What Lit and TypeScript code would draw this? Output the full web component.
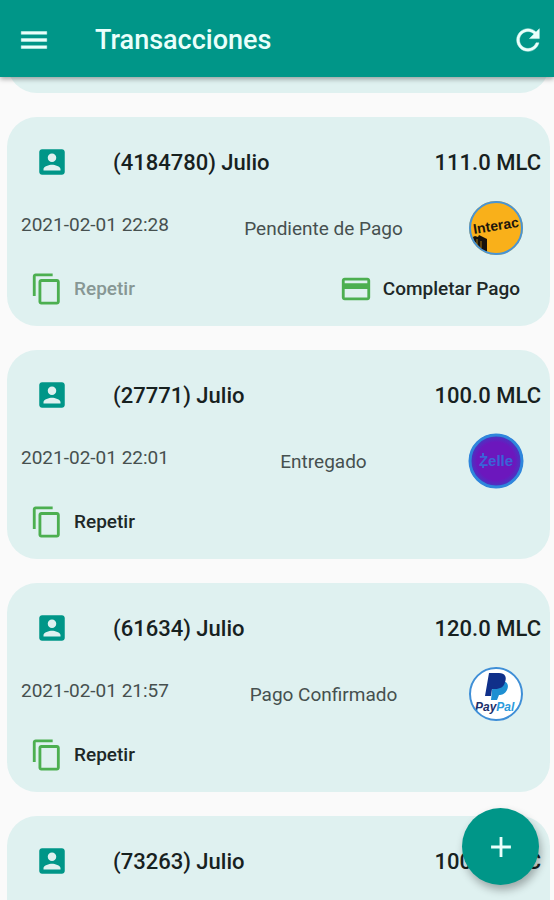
import { LitElement, html, svg, css, nothing } from "lit";
import { customElement, property } from "lit/decorators.js";

type Provider = "interac" | "zelle" | "paypal" | "other";

interface Transaction {
  id: string;
  name: string;
  amount: string;
  date: string;
  status: string;
  provider: Provider;
  pending: boolean;
}

const transactions: Transaction[] = [
  { id: "4184780", name: "Julio", amount: "111.0 MLC", date: "2021-02-01 22:28", status: "Pendiente de Pago", provider: "interac", pending: true },
  { id: "27771", name: "Julio", amount: "100.0 MLC", date: "2021-02-01 22:01", status: "Entregado", provider: "zelle", pending: false },
  { id: "61634", name: "Julio", amount: "120.0 MLC", date: "2021-02-01 21:57", status: "Pago Confirmado", provider: "paypal", pending: false },
  { id: "73263", name: "Julio", amount: "100.0 MLC", date: "", status: "", provider: "other", pending: false },
];

const paths = {
  menu: "M3 18h18v-2H3v2zm0-5h18v-2H3v2zm0-7v2h18V6H3z",
  refresh: "M17.65 6.35C16.2 4.9 14.21 4 12 4c-4.42 0-7.99 3.58-7.99 8s3.57 8 7.99 8c3.73 0 6.84-2.55 7.73-6h-2.08c-.82 2.33-3.04 4-5.65 4-3.31 0-6-2.69-6-6s2.69-6 6-6c1.66 0 3.14.69 4.22 1.78L13 11h7V4l-2.35 2.35z",
  account: "M3 5v14c0 1.1.89 2 2 2h14c1.1 0 2-.9 2-2V5c0-1.1-.9-2-2-2H5c-1.11 0-2 .9-2 2zm12 4c0 1.66-1.34 3-3 3s-3-1.34-3-3 1.34-3 3-3 3 1.34 3 3zm-9 8c0-2 4-3.1 6-3.1s6 1.1 6 3.1v1H6v-1z",
  copy: "M16 1H4c-1.1 0-2 .9-2 2v14h2V3h12V1zm3 4H8c-1.1 0-2 .9-2 2v14c0 1.1.9 2 2 2h11c1.1 0 2-.9 2-2V7c0-1.1-.9-2-2-2zm0 16H8V7h11v14z",
  card: "M20 4H4c-1.11 0-1.99.89-1.99 2L2 18c0 1.11.89 2 2 2h16c1.11 0 2-.89 2-2V6c0-1.11-.89-2-2-2zm0 14H4v-6h16v6zm0-10H4V6h16v2z",
  add: "M19 13h-6v6h-2v-6H5v-2h6V5h2v6h6v2z",
};

const icon = (d: string) => html`<svg class="icon" viewBox="0 0 24 24" aria-hidden="true"><path d=${d} /></svg>`;

const logos = {
  interac: svg`
    <circle cx="28" cy="28" r="27" fill="#f9b01a" />
    <path d="M5 37l2-1 3 1 1-2 8 4v13l-5-2-5-6-3-3z" fill="#15110c" />
    <path d="M9 39v5M13 41v7" stroke="#a8760f" stroke-width="1" />
    <text x="6" y="34" transform="rotate(-9 6 34)" font-size="14" font-weight="700" fill="#1d160c">Interac</text>
    <circle cx="28" cy="28" r="26" fill="none" stroke="#4794d6" stroke-width="2" />`,
  zelle: svg`
    <defs>
      <radialGradient id="zelle-fill">
        <stop offset="0.7" stop-color="#6c17bd" />
        <stop offset="1" stop-color="#3d3fc4" />
      </radialGradient>
    </defs>
    <circle cx="28" cy="28" r="27" fill="url(#zelle-fill)" />
    <text x="28" y="33" text-anchor="middle" font-size="15" font-weight="700" fill="#3b63d8">Zelle</text>
    <path d="M15 20v3M15 33v2" stroke="#3b63d8" stroke-width="2" />
    <circle cx="28" cy="28" r="26" fill="none" stroke="#2f86dc" stroke-width="3" />`,
  paypal: svg`
    <circle cx="28" cy="28" r="27" fill="#fff" />
    <path d="M25 15h10c5 1 6 5 4 9-2 4-5 5-8 5l-2 5h-6z" fill="#1d8fd2" />
    <path d="M21 7h10c6 0 8 4 6 9-1 5-5 7-10 7h-3l-1 7h-6z" fill="#10308a" />
    <text x="7" y="45" font-size="12" font-weight="700" font-style="italic" fill="#1b2f6b">Pay<tspan fill="#2a9bdc">Pal</tspan></text>
    <circle cx="28" cy="28" r="26" fill="none" stroke="#3f8fd6" stroke-width="2" />`,
  other: svg`
    <circle cx="28" cy="28" r="26" fill="#2f9fe0" stroke="#3f8fd6" stroke-width="2" />`,
};

const iconStyles = css`
  .icon {
    display: block;
    flex: none;
    width: 34px;
    height: 34px;
    fill: currentColor;
  }
  button {
    display: flex;
    align-items: center;
    margin: 0;
    padding: 0;
    border: 0;
    background: none;
    color: inherit;
    font: inherit;
    cursor: pointer;
  }
`;

@customElement("transaction-card")
export class TransactionCard extends LitElement {
  @property({ attribute: false }) item!: Transaction;

  static styles = [
    iconStyles,
    css`
      :host {
        display: block;
      }
      .card {
        box-sizing: border-box;
        padding: 20px 9px 8px 14px;
        border-radius: 30px;
        background: #dff1f0;
      }
      .heading {
        display: flex;
        align-items: center;
        height: 50px;
        padding-left: 14px;
        color: #17211f;
        font-size: 22px;
        font-weight: 500;
      }
      .account {
        color: #009688;
      }
      .name {
        flex: 1;
        margin: 0 0 0 44px;
        font: inherit;
      }
      .details {
        display: grid;
        grid-template-columns: 158px 1fr 56px;
        align-items: center;
        height: 56px;
        margin-top: 13px;
        padding-right: 17px;
        color: #46504f;
        font-size: 19px;
      }
      .date {
        padding-bottom: 7px;
        white-space: nowrap;
      }
      .status {
        text-align: center;
      }
      .logo {
        display: block;
        width: 56px;
        height: 56px;
        font-family: "Liberation Sans", sans-serif;
      }
      .actions {
        display: flex;
        justify-content: space-between;
        height: 59px;
        margin-top: 3px;
        padding: 0 21px 0 9px;
        color: #1d2827;
        font-size: 19px;
        font-weight: 500;
      }
      .actions button {
        gap: 10px;
      }
      .actions .icon {
        color: #4caf50;
      }
      .actions button:disabled {
        color: #879794;
        cursor: default;
      }
    `,
  ];

  render() {
    const t = this.item;
    return html`
      <article class="card">
        <div class="heading">
          <span class="account">${icon(paths.account)}</span>
          <h2 class="name">(${t.id}) ${t.name}</h2>
          <span>${t.amount}</span>
        </div>
        <div class="details">
          <time class="date">${t.date}</time>
          <span class="status">${t.status}</span>
          <svg class="logo" viewBox="0 0 56 56" role="img" aria-label=${t.provider}>${logos[t.provider]}</svg>
        </div>
        ${t.status
          ? html`<div class="actions">
              <button type="button" ?disabled=${t.pending}>${icon(paths.copy)}<span>Repetir</span></button>
              ${t.pending
                ? html`<button type="button">${icon(paths.card)}<span>Completar Pago</span></button>`
                : nothing}
            </div>`
          : nothing}
      </article>
    `;
  }
}

@customElement("app-root")
export class AppRoot extends LitElement {
  static styles = [
    iconStyles,
    css`
      :host {
        display: flex;
        flex-direction: column;
        height: 100vh;
        overflow: hidden;
        background: #fafafa;
        font-family: Roboto, sans-serif;
      }
      .bar {
        position: relative;
        z-index: 1;
        display: flex;
        align-items: center;
        flex: none;
        height: 77px;
        box-sizing: border-box;
        padding: 3px 9px 0 17px;
        background: #009688;
        color: #eafffb;
        box-shadow: 0 2px 5px rgba(0, 0, 0, 0.35);
      }
      .bar .icon {
        stroke: currentColor;
        stroke-width: 0.3;
      }
      .title {
        flex: 1;
        margin: 0 0 0 44px;
        font-size: 27px;
        font-weight: 500;
      }
      .list {
        flex: 1;
        min-height: 0;
        overflow-y: auto;
        scrollbar-width: none;
        display: flex;
        flex-direction: column;
        gap: 24px;
        padding: 0 4px 0 7px;
      }
      .list > * {
        flex: none;
      }
      .previous {
        height: 46px;
        margin-top: -30px;
        border-radius: 0 0 30px 30px;
        background: #dff1f0;
      }
      .fab {
        position: fixed;
        right: 15px;
        bottom: 15px;
        z-index: 2;
        justify-content: center;
        width: 77px;
        height: 77px;
        border-radius: 50%;
        background: #009688;
        color: #eafffb;
        box-shadow: 2px 5px 9px rgba(0, 0, 0, 0.3);
      }
    `,
  ];

  render() {
    return html`
      <header class="bar">
        <button type="button" aria-label="Menú">${icon(paths.menu)}</button>
        <h1 class="title">Transacciones</h1>
        <button type="button" aria-label="Actualizar">${icon(paths.refresh)}</button>
      </header>
      <main class="list">
        <div class="previous"></div>
        ${transactions.map((t) => html`<transaction-card .item=${t}></transaction-card>`)}
      </main>
      <button class="fab" type="button" aria-label="Agregar">${icon(paths.add)}</button>
    `;
  }
}
